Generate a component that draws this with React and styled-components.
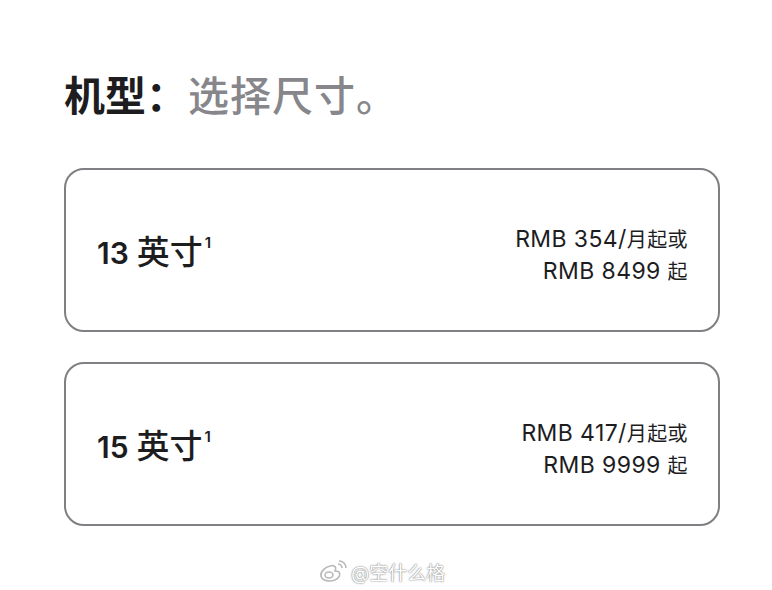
import styled, { createGlobalStyle } from "styled-components";

const GlobalStyle = createGlobalStyle`
  body {
    margin: 0;
    background: #fff;
    font-family: Inter, "Noto Sans CJK SC", sans-serif;
    color: #1d1d1f;
  }
`;

const Page = styled.div`
  width: 772px;
  height: 590px;
  box-sizing: border-box;
  padding: 68px 52px 0 64px;
  position: relative;
`;

const Heading = styled.h2`
  margin: 0 0 50px 0;
  font-family: "Noto Sans CJK SC", sans-serif;
  font-size: 41px;
  font-weight: 700;
  line-height: 50px;
  color: #1d1d1f;
`;

const Muted = styled.span`
  color: #86868b;
  font-weight: 500;
  letter-spacing: 1px;
  margin-left: 1px;
`;

const List = styled.div`
  display: flex;
  flex-direction: column;
  gap: 30px;
`;

const Card = styled.div`
  height: 164px;
  box-sizing: border-box;
  border: 2px solid #7f7f84;
  border-radius: 20px;
  display: flex;
  align-items: center;
  justify-content: space-between;
  padding: 0 30px 0 31px;
`;

const Size = styled.div`
  font-size: 30px;
  font-weight: 600;
  color: #1d1d1f;
  line-height: 40px;
  padding-top: 2px;
`;

// CJK glyphs sit a little larger than the Latin digits around them
const Han = styled.span`
  font-family: "Noto Sans CJK SC", sans-serif;
  font-size: ${(p) => p.$size || 33}px;
  font-weight: ${(p) => p.$weight || 500};
  margin-left: ${(p) => p.$gap || 0}px;
`;

const Sup = styled.sup`
  font-size: 15px;
  font-weight: 600;
  vertical-align: top;
  line-height: 1;
  position: relative;
  top: 5px;
  margin-left: 2px;
`;

const Price = styled.div`
  text-align: right;
  font-size: 23px;
  letter-spacing: 0.4px;
  line-height: 31px;
  color: #1d1d1f;
  padding-top: 10px;
`;

const Mark = styled.div`
  position: absolute;
  left: 318px;
  top: 558px;
  display: flex;
  align-items: center;
  gap: 3px;
  font-size: 19px;
  color: #fff;
  text-shadow: 0 0 2px rgba(0, 0, 0, 0.45), 0 0 1px rgba(0, 0, 0, 0.4);
`;

const models = [
  { size: "13", monthly: "354", total: "8499" },
  { size: "15", monthly: "417", total: "9999" },
];

const WeiboIcon = () => (
  <svg width="30" height="24" viewBox="0 0 30 24" fill="none">
    <g stroke="#b9b9b9" strokeWidth="1.6" fill="#fff">
      <path d="M12 6c-5 1-10 6-9 10 1 5 9 6 14 4 4-2 6-5 4-8-1-1-3-1-4-1 1-2 1-4-1-5-1-1-3 0-4 0z" />
      <ellipse cx="11" cy="15" rx="4" ry="3" />
      <path d="M20 4c2 0 4 2 4 4" fill="none" />
      <path d="M21 1c4 0 7 3 7 7" fill="none" />
    </g>
  </svg>
);

export default function App() {
  return (
    <>
      <GlobalStyle />
      <Page>
        <Heading>
          机型：<Muted>选择尺寸。</Muted>
        </Heading>
        <List>
          {models.map((m) => (
            <Card key={m.size}>
              <Size>
                {m.size}
                <Han $gap={8}>英寸</Han>
                <Sup>1</Sup>
              </Size>
              <Price>
                RMB {m.monthly}/<Han $size={20} $weight={400}>月起或</Han>
                <br />
                RMB {m.total} <Han $size={20} $weight={400}>起</Han>
              </Price>
            </Card>
          ))}
        </List>
        <Mark>
          <WeiboIcon />
          @空什么格
        </Mark>
      </Page>
    </>
  );
}
